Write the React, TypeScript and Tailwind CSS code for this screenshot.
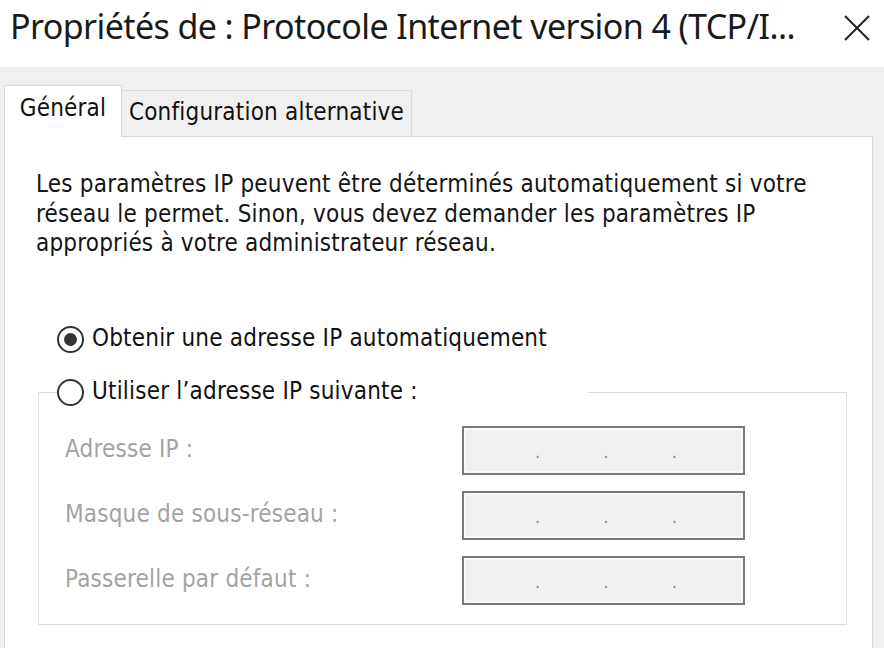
import React from 'react';

// Windows-like radio button
const Radio: React.FC<{ checked?: boolean }> = ({ checked }) => (
  <span className="w-[27px] h-[27px] rounded-full border-2 border-[#333333] bg-white flex items-center justify-center shrink-0">
    {checked && <span className="w-[13px] h-[13px] rounded-full bg-[#333333]" />}
  </span>
);

const IpField: React.FC = () => (
  <div className="w-[283px] h-[49px] border-2 border-[#7a7a7a] bg-[#f0f0f0] shadow-[inset_0_0_0_2px_#fafafa] flex items-center justify-center gap-[63px] pt-[4px] pl-[5px] text-[#8a86a8] text-[18px] leading-none">
    <span>.</span>
    <span>.</span>
    <span>.</span>
  </div>
);

const fields = ['Adresse IP :', 'Masque de sous-réseau :', 'Passerelle par défaut :'];

export default function App() {
  return (
    <div className="w-[884px] h-[648px] overflow-hidden bg-white flex flex-col text-[#111111] text-[24px] leading-[29.5px] tracking-[0.2px]" style={{ fontFamily: '"DejaVu Sans Condensed", "DejaVu Sans", sans-serif', fontStretch: 'semi-condensed' }}>
      {/* Title bar */}
      <div className="h-[67px] shrink-0 flex items-center justify-between pl-[10px] pr-[14px] bg-white">
        <span className="text-[34px] leading-none tracking-[-0.6px] text-[#1a1a1a] whitespace-nowrap -mt-[16px]" style={{ fontFamily: '"Noto Sans", sans-serif', fontStretch: 'normal' }}>
          Propriétés de : Protocole Internet version 4 (TCP/I...
        </span>
        <svg width="26" height="26" viewBox="0 0 26 26" className="-mt-[12px]">
          <path d="M1 1L25 25M25 1L1 25" stroke="#222" strokeWidth="2" />
        </svg>
      </div>

      {/* Body */}
      <div className="flex-1 bg-[#f0f0f0] flex flex-col pt-[18px] pl-[4px] pr-[11px]">
        {/* Tabs */}
        <div className="flex items-end h-[52px] -mb-px relative z-10">
          <div className="w-[118px] h-[52px] bg-white border border-b-0 border-[#d9d9d9] flex items-center justify-center pb-[6px]">
            Général
          </div>
          <div className="w-[290px] h-[47px] bg-[#f0f0f0] border border-l-0 border-b-[#d9d9d9] border-[#d9d9d9] flex items-center justify-center pb-[2px]">
            Configuration alternative
          </div>
        </div>

        {/* Pane */}
        <div className="flex-1 bg-white border border-b-0 border-[#d9d9d9] pl-[31px] pt-[33px]">
          <p className="text-[#151515]">
            Les paramètres IP peuvent être déterminés automatiquement si votre<br />
            réseau le permet. Sinon, vous devez demander les paramètres IP<br />
            appropriés à votre administrateur réseau.
          </p>

          <label className="h-[27px] flex items-center gap-[8px] mt-[67px] ml-[21px]">
            <Radio checked />
            Obtenir une adresse IP automatiquement
          </label>

          <fieldset className="mt-[26px] ml-[2px] w-[809px] h-[246px] border border-[#dcdcdc] pl-[26px] pr-0 pb-0">
            <legend className="w-[531px] h-[27px] flex items-center gap-[8px] -ml-[8px] p-0 bg-white">
              <Radio />
              Utiliser l’adresse IP suivante :
            </legend>
            <div className="flex flex-col gap-[16px] mt-[20px]">
              {fields.map((f) => (
                <div key={f} className="flex items-center justify-between pr-[101px]">
                  <span className="text-[#a3a3a3]">{f}</span>
                  <IpField />
                </div>
              ))}
            </div>
          </fieldset>
        </div>
      </div>
    </div>
  );
}
